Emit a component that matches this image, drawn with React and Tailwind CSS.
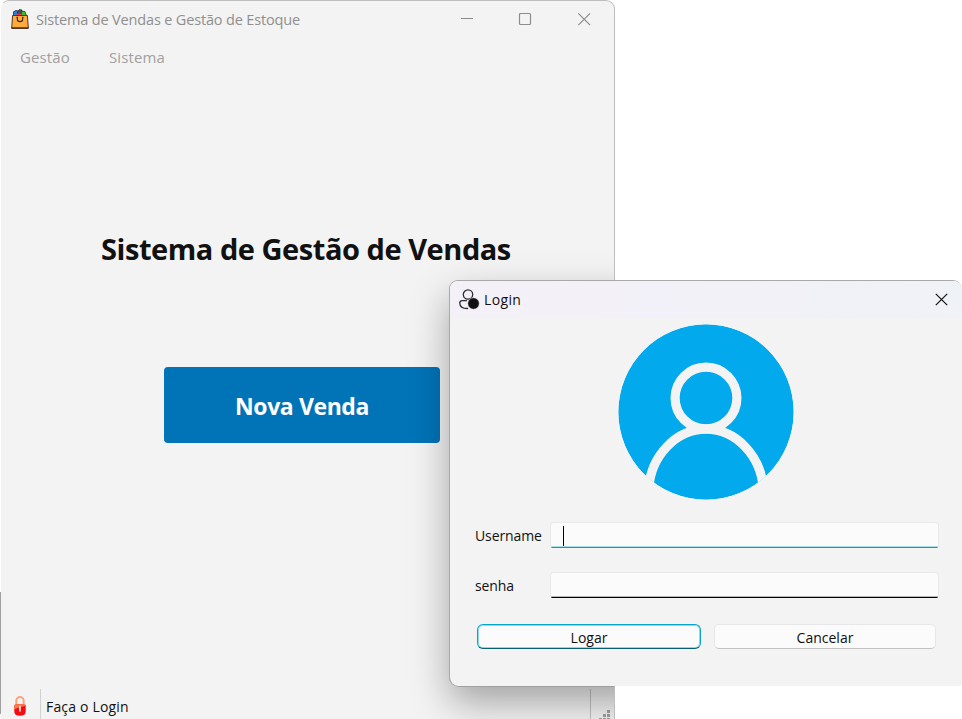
import React from "react";

function BagIcon() {
  return (
    <svg width="18" height="20" viewBox="0 0 18 20" className="block">
      <path d="M2.500 7V2.800L5 1.500l2.500.6V7z" fill="#1c86e0" stroke="#1d2a3a" strokeWidth=".8" />
      <path d="M6.500 3l1.800-2.400 2.700.5v4H6.500z" fill="#4b5562" stroke="#222" strokeWidth=".8" />
      <path d="M10.200 2.600l3.600-.3 1.600 4.200h-5.200z" fill="#3fc01c" stroke="#1f3a1c" strokeWidth=".8" />
      <path d="M5.300 4.600l5.500.3v2H5.300z" fill="#f0365a" />
      <path d="M1.600 6.500h14.800l.9 12.600H.7z" fill="#ffab3d" stroke="#59331a" strokeWidth="1" />
      <path d="M.5 19.200h17" stroke="#3a2012" strokeWidth="1.300" />
      <path d="M6.300 8.300v1.600a2.700 2.700 0 0 0 5.400 0V8.300" fill="none" stroke="#3a2415" strokeWidth="1.100" />
      <path d="M5.500 8.300h1.600M10.900 8.300h1.600" stroke="#3a2415" strokeWidth="1" />
    </svg>
  );
}

function WindowControls() {
  return (
    <svg width="131" height="14" viewBox="0 0 131 14" className="block" fill="none" stroke="#8c8c8c">
      <path d="M0 6.500h12" />
      <rect x="58.500" y="1.500" width="11" height="11" rx="1" strokeWidth="1.200" />
      <path d="M117.300 1.300l11.800 11.800M129.100 1.300l-11.800 11.800" strokeWidth="1.200" />
    </svg>
  );
}

function LockIcon() {
  return (
    <svg width="14" height="22" viewBox="0 0 14 22" className="block">
      <path d="M3.300 10V6a3.700 3.900 0 0 1 7.400 0v4" fill="none" stroke="#fba27c" strokeWidth="2" />
      <path d="M1.300 10q5.700-2 11.400 0v6.500q0 4.300-5.700 4.300t-5.700-4.300z" fill="#f30c10" />
      <path d="M1.300 10q5.700-2 11.400 0v.8q-5.700.6-11.400 3.400z" fill="#fd7a48" />
      <path d="M6 11.500l1.700-.8V16.500H6.200z" fill="#fff" />
    </svg>
  );
}

function UserBadgeIcon() {
  return (
    <svg width="21" height="21" viewBox="0 0 21 21" className="block">
      <circle cx="9" cy="5.500" r="4.700" fill="none" stroke="#2b2b30" strokeWidth="1.300" />
      <path d="M7.500 11.700H3.200Q.9 11.700.8 13.900C.8 17.600 3.600 19.500 8.600 19.500" fill="none" stroke="#2b2b30" strokeWidth="1.300" strokeLinecap="round" />
      <circle cx="14.500" cy="14.500" r="5.700" fill="#111" stroke="#f4f1f8" strokeWidth=".5" />
    </svg>
  );
}

function Avatar() {
  return (
    <svg width="176" height="176" viewBox="0 0 176 176" className="block">
      <defs>
        <clipPath id="disc"><circle cx="88" cy="88" r="87.700" /></clipPath>
      </defs>
      <g clipPath="url(#disc)">
        <circle cx="88" cy="88" r="87.700" fill="#02a9ec" />
        <g fill="none" stroke="#f3f3f3" strokeWidth="9.200">
          <circle cx="88" cy="74" r="30.900" />
          <path d="M30.800 164C33 132 58 105.200 88 105.200S143 132 145.200 164" />
        </g>
      </g>
    </svg>
  );
}

function MainWindow() {
  return (
    <div className="relative flex h-[719px] w-[615px] flex-col overflow-hidden rounded-t-[9px] border-t border-r border-l border-[#bdbdbd] border-l-white bg-[#f3f3f3]">
      <div className="flex h-[36px] items-center pl-[10px]">
        <BagIcon />
        <span className="mt-px ml-[7px] w-[425px] whitespace-nowrap text-[14.500px] tracking-[-0.16px] text-[#8f8f8f]">
          Sistema de Vendas e Gestão de Estoque
        </span>
        <WindowControls />
      </div>
      <div className="mt-[2px] flex h-[36px] items-center gap-[39px] pl-[19px] text-[15px] text-[#a0a0a0]">
        <span className="w-[50px] whitespace-nowrap tracking-[0.1px]">Gestão</span>
        <span className="whitespace-nowrap tracking-[0.1px]">Sistema</span>
      </div>
      <h1 className="mt-[153px] ml-[100px] whitespace-nowrap text-[29px] leading-[42px] font-bold tracking-[-0.45px] text-[#111]">
        Sistema de Gestão de Vendas
      </h1>
      <button className="mt-[97px] ml-[163px] h-[76px] w-[276px] shrink-0 rounded-[4px] bg-[#0173b7] pt-[3px] text-[23px] font-bold tracking-[-0.4px] text-white">
        Nova Venda
      </button>
      <div className="mt-auto flex h-[30px] items-center text-[14px] text-[#111]">
        <div className="flex h-full w-[40px] items-center border-r border-[#d2d2d2] pl-[12px] pt-1">
          <LockIcon />
        </div>
        <span className="ml-[5px] w-[544px] pt-[5px] tracking-[0.18px]">Faça o Login</span>
        <div className="flex h-full items-end border-l border-[#c2c2c2] pl-[8px]">
          <svg width="12" height="9" viewBox="0 0 12 9" fill="#a0a0a0">
            <path d="M8 0h3v3H8zM4 4h3v3H4zM8 4h3v3H8zM0 8h3v1H0zM4 8h3v1H4zM8 8h3v1H8z" />
          </svg>
        </div>
      </div>
      <div className="pointer-events-none absolute top-[280px] left-[449px] h-[405px] w-[520px] rounded-[9px] shadow-[0_0_0_1px_#a0a0a0,0_16px_38px_0px_rgba(0,0,0,0.34)]" />
    </div>
  );
}

function Field({ label, focused }) {
  return (
    <label className="flex h-[26px] items-center text-[14px] text-[#111]">
      <span className="w-[75px] tracking-[-0.1px]">{label}</span>
      <span className="flex h-[26px] w-[389px] flex-col overflow-hidden rounded-t-[4px] rounded-b-[2px] border-x border-t border-[#e9e9e9] bg-[#fbfbfb]">
        <span className="flex h-[23px] items-end pl-[12px]">
          {focused && <span className="h-[20px] w-px bg-black" />}
        </span>
        <span className={focused ? "h-px bg-[#a9dde8]" : "h-px bg-[#b5b5b5]"} />
        <span className={focused ? "h-px bg-[#0c9bbb]" : "h-px bg-black"} />
      </span>
    </label>
  );
}

function LoginDialog() {
  return (
    <div className="absolute top-[280px] left-[449px] flex h-[406px] w-[513px] flex-col overflow-hidden rounded-[9px] rounded-br-[3px] border-t border-l border-[#a9a9a9] bg-[#f3f3f3]">
      <div className="flex h-[37px] shrink-0 items-center bg-linear-to-r from-[#f5f0f8] via-[#f2f1f8] to-[#eff2f7] pl-[9px] text-[14px] text-[#111]">
        <UserBadgeIcon />
        <span className="-mt-px ml-[4px] w-[451px] tracking-[0.35px]">Login</span>
        <svg width="13" height="13" viewBox="0 0 13 13" stroke="#111" strokeWidth="1.200">
          <path d="M.8.8l11.400 11.400M12.200.8L.8 12.200" />
        </svg>
      </div>
      <div className="mt-[6px] ml-[168px]">
        <Avatar />
      </div>
      <div className="mt-[22px] flex flex-col gap-[24px] pl-[25px]">
        <Field label="Username" focused />
        <Field label="senha" />
      </div>
      <div className="mt-[26px] flex gap-[13px] pl-[27px] text-[14px] text-[#111]">
        <button className="h-[25px] w-[224px] rounded-[6px] border border-[#08a5c6] border-b-[#075f74] bg-[#fbfbfb] leading-[25px] shadow-[inset_0_0_0_1px_rgba(8,175,208,0.45)]">
          Logar
        </button>
        <button className="h-[25px] w-[222px] rounded-[5px] border border-[#e7e7e7] border-b-[#c3c3c3] bg-[#fbfbfb] leading-[25px]">
          Cancelar
        </button>
      </div>
    </div>
  );
}

export default function App() {
  return (
    <div className="relative h-[719px] w-[962px] overflow-hidden bg-white font-['Open_Sans','Noto_Sans',sans-serif]">
      <MainWindow />
      <div className="absolute top-[592px] left-0 h-[122px] w-px bg-[#a0a0a0]" />
      <LoginDialog />
    </div>
  );
}
